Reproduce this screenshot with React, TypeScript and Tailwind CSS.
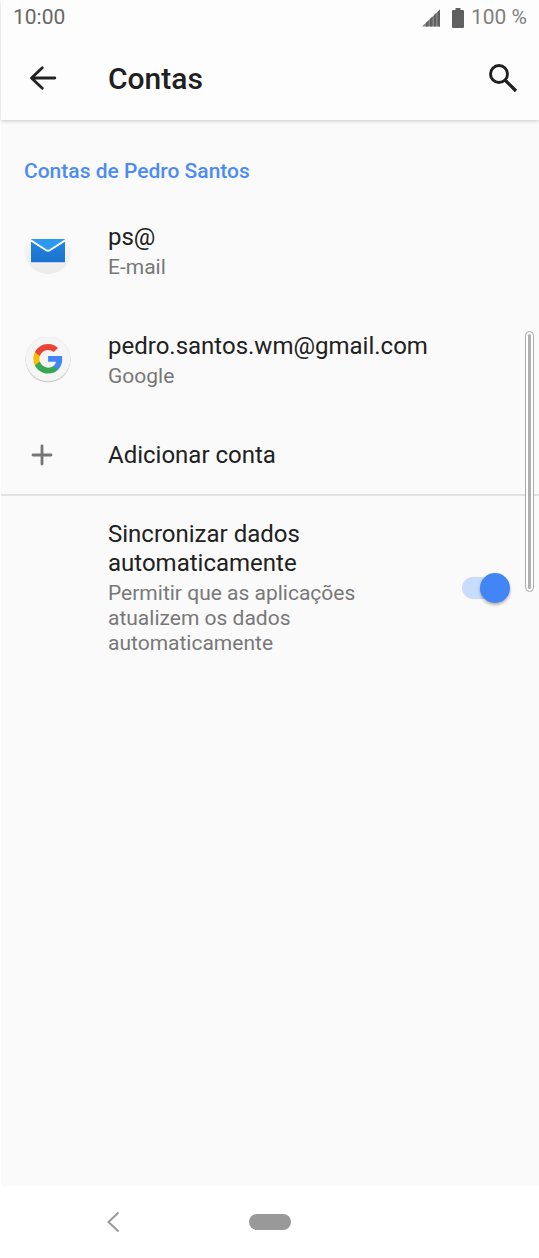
import { useState, type ReactNode } from "react";

type Account = {
  id: string;
  name: string;
  type: string;
  icon: ReactNode;
};

const ACCOUNTS: Account[] = [
  { id: "email", name: "ps@", type: "E-mail", icon: <MailIcon /> },
  {
    id: "google",
    name: "pedro.santos.wm@gmail.com",
    type: "Google",
    icon: <GoogleIcon />,
  },
];

function MailIcon() {
  return (
    <svg viewBox="0 0 48 48" className="h-12 w-12" aria-hidden="true">
      <defs>
        <linearGradient id="mail-disc" x1="0" y1="0" x2="0" y2="1">
          <stop offset="0.1" stopColor="#fafafa" />
          <stop offset="1" stopColor="#ebebeb" />
        </linearGradient>
        <linearGradient id="mail-body" x1="0" y1="0" x2="0" y2="1">
          <stop offset="0" stopColor="#2386dd" />
          <stop offset="1" stopColor="#1a72cf" />
        </linearGradient>
      </defs>
      <circle cx="24" cy="22.5" r="23.5" fill="url(#mail-disc)" />
      <path d="M7 11h34v23.300H7z" fill="url(#mail-body)" />
      <path d="M7 11h34L26 21.500q-2 1.300-4 0z" fill="#2c98ee" />
      <path
        d="M6.500 12.200l15.300 9.800q2.200 1.400 4.400 0l15.300-9.800"
        fill="none"
        stroke="#fafafa"
        strokeWidth="2"
      />
    </svg>
  );
}

function GoogleIcon() {
  return (
    <svg viewBox="0 0 48 48" className="h-12 w-12" aria-hidden="true">
      <circle cx="24" cy="23" r="22.500" fill="#cfcfcf" />
      <circle cx="24" cy="21.800" r="22.500" fill="#e9e9e9" />
      <circle cx="24" cy="22" r="22" fill="#f5f5f5" />
      <g transform="translate(8 5.700) scale(1.340)">
        <path
          d="M22.560 12.250c0-.780-.070-1.530-.200-2.250H12v4.260h5.920c-.260 1.370-1.040 2.530-2.210 3.310v2.770h3.570c2.080-1.920 3.280-4.740 3.280-8.090z"
          fill="#4285f4"
        />
        <path
          d="M12 23c2.970 0 5.460-.980 7.280-2.660l-3.570-2.770c-.980.660-2.230 1.060-3.710 1.060-2.860 0-5.290-1.930-6.160-4.530H2.180v2.840C3.990 20.530 7.700 23 12 23z"
          fill="#34a853"
        />
        <path
          d="M5.840 14.090c-.220-.660-.350-1.360-.350-2.090s.130-1.430.350-2.090V7.070H2.180C1.430 8.550 1 10.220 1 12s.430 3.450 1.180 4.930l3.660-2.840z"
          fill="#fbbc05"
        />
        <path
          d="M12 5.380c1.620 0 3.060.560 4.210 1.640l3.150-3.150C17.450 2.090 14.970 1 12 1 7.700 1 3.990 3.470 2.180 7.070l3.660 2.840c.870-2.600 3.300-4.530 6.160-4.530z"
          fill="#ea4335"
        />
      </g>
    </svg>
  );
}

function SignalIcon() {
  return (
    <svg viewBox="0 0 18 18" className="h-[18px] w-[18px]" aria-hidden="true">
      <path d="M0 17.500L18 .500v17z" fill="#858585" />
      <path
        d="M4 17.500v-3.600l2.400-2.300v5.900zM8 17.500V10l2.400-2.200v9.700zM12 17.500V6.200L14 4.300v13.200zM15.600 17.500V2.800L18 .500v17z"
        fill="#606060"
      />
    </svg>
  );
}

function BatteryIcon() {
  return (
    <svg viewBox="0 0 12 20" className="h-5 w-3" aria-hidden="true">
      <path
        d="M3.500 0h5v2H11q1 0 1 1v16q0 1-1 1H1q-1 0-1-1V3q0-1 1-1h2.500z"
        fill="#606060"
      />
    </svg>
  );
}

function StatusBar() {
  return (
    <div className="flex h-9 items-center justify-between px-3 text-[21px] text-[#666]">
      <span>10:00</span>
      <div className="flex items-center">
        <SignalIcon />
        <span className="ml-3 mr-[7px] flex">
          <BatteryIcon />
        </span>
        <span className="text-[#808080]">100 %</span>
      </div>
    </div>
  );
}

function Header() {
  return (
    <header className="relative bg-[#fdfdfd] shadow-[0_1px_4px_rgba(0,0,0,0.2)]">
      <StatusBar />
      <div className="flex h-[84px] items-center pl-6 pr-[21px]">
        <button type="button" aria-label="Voltar" className="w-[83px] shrink-0">
          <svg viewBox="0 0 36 36" className="h-9 w-9" aria-hidden="true">
            <path
              d="M29.800 18H7M17.300 7.800L6.500 18l10.800 10.200"
              fill="none"
              stroke="#222"
              strokeWidth="2.800"
              strokeLinecap="round"
              strokeLinejoin="round"
            />
          </svg>
        </button>
        <h1 className="flex-1 text-[30px] font-medium text-[#202020]">Contas</h1>
        <button type="button" aria-label="Pesquisar">
          <svg viewBox="0 0 30 30" className="h-[30px] w-[30px]" aria-hidden="true">
            <circle cx="11" cy="11" r="8.500" fill="none" stroke="#202020" strokeWidth="2.900" />
            <path d="M17 17l11 11" fill="none" stroke="#202020" strokeWidth="3.300" />
          </svg>
        </button>
      </div>
    </header>
  );
}

function AccountRow({ account }: { account: Account }) {
  return (
    <li>
      <button
        type="button"
        className="flex h-[109px] w-full items-center pl-[23px] pr-6 text-left"
      >
        <span className="w-[84px] shrink-0">{account.icon}</span>
        <span className="flex min-w-0 flex-col gap-[3px]">
          <span className="text-2xl leading-[29px] text-[#212121]">{account.name}</span>
          <span className="text-[21px] leading-[25px] text-[#787878]">{account.type}</span>
        </span>
      </button>
    </li>
  );
}

function SyncRow() {
  const [enabled, setEnabled] = useState(true);

  return (
    <label className="flex items-center justify-between py-6 pl-[107px] pr-[29px]">
      <span className="flex max-w-[260px] flex-col gap-[3px]">
        <span className="text-2xl leading-[29px] text-[#212121]">
          Sincronizar dados automaticamente
        </span>
        <span className="text-[21px] leading-[25px] text-[#787878]">
          Permitir que as aplicações atualizem os dados automaticamente
        </span>
      </span>
      <input
        type="checkbox"
        role="switch"
        checked={enabled}
        onChange={(event) => setEnabled(event.target.checked)}
        className="peer sr-only"
      />
      <span className="flex h-[22px] w-12 shrink-0 items-center rounded-full bg-[#d0d0d0] peer-checked:justify-end peer-checked:bg-[#cadcfc] peer-checked:[&>span]:bg-[#4285f4]">
        <span className="h-[30px] w-[30px] rounded-full bg-white shadow-[0_2px_3px_rgba(0,0,0,0.3)]" />
      </span>
    </label>
  );
}

function NavigationBar() {
  return (
    <nav className="grid h-[72px] grid-cols-[1fr_auto_1fr] items-center bg-white">
      <button type="button" aria-label="Anterior" className="ml-[104px] justify-self-start">
        <svg viewBox="0 0 16 24" className="h-6 w-4" aria-hidden="true">
          <path d="M13.500 2.500L3.500 12l10 9.500" fill="none" stroke="#999" strokeWidth="2" />
        </svg>
      </button>
      <button
        type="button"
        aria-label="Início"
        className="h-4 w-[42px] rounded-full bg-[#999]"
      />
    </nav>
  );
}

export default function App() {
  return (
    <div className="relative flex min-h-screen flex-col border-l border-white bg-[#fafafa] font-['Roboto',sans-serif]">
      <Header />
      <main className="flex-1">
        <h2 className="px-[23px] pb-3 pt-[37px] text-[21px] leading-7 font-medium text-[#4c8bf5]">
          Contas de Pedro Santos
        </h2>
        <ul>
          {ACCOUNTS.map((account) => (
            <AccountRow key={account.id} account={account} />
          ))}
        </ul>
        <button
          type="button"
          className="flex h-[79px] w-full items-center pl-[23px] text-left"
        >
          <span className="w-[84px] shrink-0 pl-[7px]">
            <svg viewBox="0 0 22 22" className="h-[22px] w-[22px]" aria-hidden="true">
              <path
                d="M11 2v18M2 11h18"
                fill="none"
                stroke="#757575"
                strokeWidth="2.800"
                strokeLinecap="round"
              />
            </svg>
          </span>
          <span className="text-2xl text-[#212121]">Adicionar conta</span>
        </button>
        <hr className="border-t-2 border-[#e2e2e2]" />
        <SyncRow />
      </main>
      <NavigationBar />
      <div
        aria-hidden="true"
        className="absolute right-[5px] top-[331px] flex h-[261px] w-[9px] justify-center rounded-full border border-[#aaa] bg-white py-0.5"
      >
        <div className="w-[3px] rounded-full bg-[#b0b0b0]" />
      </div>
    </div>
  );
}
